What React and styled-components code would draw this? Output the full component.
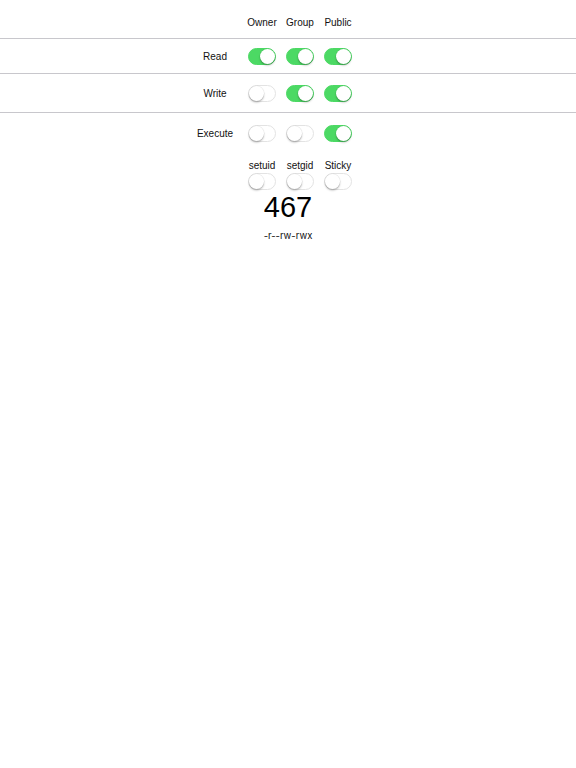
import React, { useState } from 'react';
import styled, { createGlobalStyle } from 'styled-components';

const GlobalStyle = createGlobalStyle`
  body {
    margin: 0;
    background: #ffffff;
    font-family: "Liberation Sans", Inter, sans-serif;
    color: #000;
  }
`;

const Page = styled.div`
  width: 576px;
  min-height: 768px;
  background: #fff;
`;

const Row = styled.div`
  display: grid;
  grid-template-columns: 53px repeat(3, 38px);
  padding-left: 190px;
  height: ${p => p.h}px;
  padding-top: ${p => p.pt || 0}px;
  box-sizing: border-box;
  align-items: center;
  border-bottom: ${p => (p.line ? '1px solid #c8c7cc' : 'none')};
`;

const RowLabel = styled.div`
  font-size: 10px;
  line-height: 12px;
  text-align: center;
  padding: 2px 3px 0 0;
  color: #111;
`;

const ColLabel = styled.div`
  font-size: 10px;
  line-height: 12px;
  text-align: center;
  padding-top: 2px;
  color: #111;
`;

const Cell = styled.div`
  display: flex;
  justify-content: center;
  align-items: center;
`;

const Track = styled.button`
  width: 28px;
  height: 17px;
  padding: 0;
  border-radius: 9px;
  border: 1px solid ${p => (p.on ? '#4cd964' : '#e3e3e3')};
  background: ${p => (p.on ? '#4cd964' : '#ffffff')};
  position: relative;
  cursor: pointer;
  box-sizing: border-box;
`;

const Knob = styled.span`
  position: absolute;
  top: 0;
  left: ${p => (p.on ? '11px' : '0')};
  width: 15px;
  height: 15px;
  border-radius: 50%;
  background: #fff;
  box-shadow: 0 1.5px 2px rgba(0, 0, 0, 0.25), 0 0 0 0.5px rgba(0, 0, 0, 0.08);
`;

const Switch = ({ on, onToggle }) => (
  <Track on={on} onClick={onToggle}>
    <Knob on={on} />
  </Track>
);

const Octal = styled.div`
  text-align: center;
  font-size: 29px;
  line-height: 32px;
`;

const PermString = styled.div`
  text-align: center;
  font-family: Inter, "Liberation Sans", sans-serif;
  font-size: 9.5px;
  line-height: 12px;
  margin-top: 7px;
  color: #111;
`;

const who = ['Owner', 'Group', 'Public'];
const kinds = ['Read', 'Write', 'Execute'];

export default function App() {
  const [bits, setBits] = useState({
    Read: [true, true, true],
    Write: [false, true, true],
    Execute: [false, false, true],
  });
  const [special, setSpecial] = useState([false, false, false]);

  const flip = (kind, i) => {
    const next = [...bits[kind]];
    next[i] = !next[i];
    setBits({ ...bits, [kind]: next });
  };

  const digit = i =>
    (bits.Read[i] ? 4 : 0) + (bits.Write[i] ? 2 : 0) + (bits.Execute[i] ? 1 : 0);
  const sp = (special[0] ? 4 : 0) + (special[1] ? 2 : 0) + (special[2] ? 1 : 0);
  const octal = (sp ? String(sp) : '') + [0, 1, 2].map(digit).join('');
  const perm =
    '-' +
    [0, 1, 2]
      .map(i => (bits.Read[i] ? 'r' : '-') + (bits.Write[i] ? 'w' : '-') + (bits.Execute[i] ? 'x' : '-'))
      .join('');

  const heights = { Read: 35, Write: 39, Execute: 40 };

  return (
    <Page>
      <GlobalStyle />
      <Row h={39} pt={6} line>
        <span />
        {who.map(w => (
          <ColLabel key={w}>{w}</ColLabel>
        ))}
      </Row>
      {kinds.map(k => (
        <Row key={k} h={heights[k]} line={k !== 'Execute'}>
          <RowLabel>{k}</RowLabel>
          {bits[k].map((on, i) => (
            <Cell key={i}>
              <Switch on={on} onToggle={() => flip(k, i)} />
            </Cell>
          ))}
        </Row>
      ))}
      <Row h={18} pt={5}>
        <span />
        {['setuid', 'setgid', 'Sticky'].map(s => (
          <ColLabel key={s}>{s}</ColLabel>
        ))}
      </Row>
      <Row h={20} pt={1}>
        <span />
        {special.map((on, i) => (
          <Cell key={i}>
            <Switch
              on={on}
              onToggle={() => setSpecial(special.map((v, j) => (j === i ? !v : v)))}
            />
          </Cell>
        ))}
      </Row>
      <Octal>{octal}</Octal>
      <PermString>{perm}</PermString>
    </Page>
  );
}
